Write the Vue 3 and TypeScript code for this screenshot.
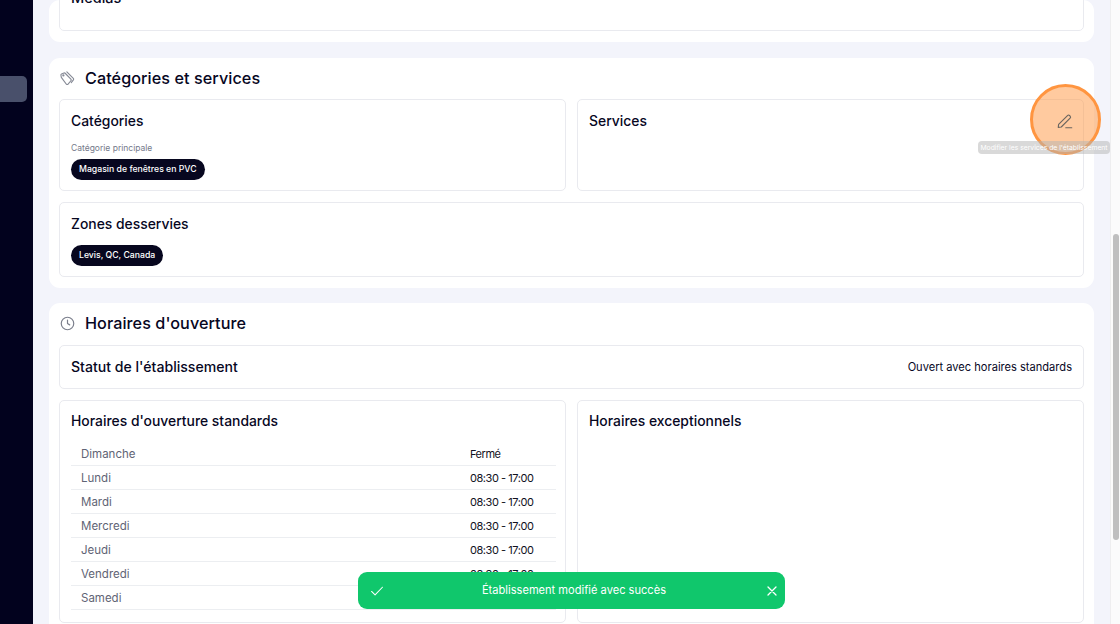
<script setup lang="ts">
const hours: { day: string; time: string }[] = [
  { day: 'Dimanche', time: 'Fermé' },
  { day: 'Lundi', time: '08:30 - 17:00' },
  { day: 'Mardi', time: '08:30 - 17:00' },
  { day: 'Mercredi', time: '08:30 - 17:00' },
  { day: 'Jeudi', time: '08:30 - 17:00' },
  { day: 'Vendredi', time: '08:30 - 17:00' },
  { day: 'Samedi', time: '08:30 - 17:00' },
]
</script>

<template>
  <div class="page">
    <aside class="sidebar"><div class="nav-active"></div></aside>
    <main class="main">
      <section class="section first">
        <div class="card media"><h3 class="card-title">Médias</h3></div>
      </section>

      <section class="section">
        <header class="section-head">
          <svg class="section-icon" viewBox="0 0 16 16" fill="none" stroke="#858995" stroke-width="1.200" stroke-linejoin="round" stroke-linecap="round">
            <path d="M1.300 6.200 1 4.300a1 1 0 0 1 .6-1.100l2.600-1.100a1.200 1.200 0 0 1 1.300.3l6.100 6.300a1.200 1.200 0 0 1 0 1.700l-3 3.600a1.200 1.200 0 0 1-1.800.1L1.800 7.300a2 2 0 0 1-.5-1.100Z" />
            <path d="m7.300 1 6.900 6.900a1.200 1.200 0 0 1 .1 1.600l-2.300 2.900" />
            <circle cx="3.600" cy="4.700" r=".6" />
          </svg>
          <h2>Catégories et services</h2>
        </header>
        <div class="two">
          <div class="card cat">
            <h3 class="card-title">Catégories</h3>
            <div class="label">Catégorie principale</div>
            <span class="chip">Magasin de fenêtres en PVC</span>
          </div>
          <div class="card cat"><h3 class="card-title">Services</h3></div>
        </div>
        <div class="card zones">
          <h3 class="card-title">Zones desservies</h3>
          <span class="chip">Levis, QC, Canada</span>
        </div>
      </section>

      <section class="section last">
        <header class="section-head">
          <svg class="section-icon" viewBox="0 0 24 24" fill="none" stroke="#7b7f8c" stroke-width="1.900" stroke-linecap="round" stroke-linejoin="round">
            <circle cx="12" cy="12" r="10" />
            <path d="M12 6.500V12l3.500 2.200" />
          </svg>
          <h2>Horaires d'ouverture</h2>
        </header>
        <div class="card status">
          <h3 class="card-title status-title">Statut de l'établissement</h3>
          <span class="status-value">Ouvert avec horaires standards</span>
        </div>
        <div class="two">
          <div class="card hours">
            <h3 class="card-title">Horaires d'ouverture standards</h3>
            <div class="table">
              <div v-for="h in hours" :key="h.day" class="row">
                <span class="day">{{ h.day }}</span>
                <span class="time">{{ h.time }}</span>
              </div>
            </div>
          </div>
          <div class="card hours"><h3 class="card-title">Horaires exceptionnels</h3></div>
        </div>
      </section>
    </main>
    <div class="scrollbar"><div class="thumb"></div></div>

    <div class="highlight">
      <svg viewBox="0 0 24 24" fill="none" stroke="#6a655f" stroke-width="1.500" stroke-linecap="round" stroke-linejoin="round">
        <path d="M3 20.500 3.500 16.500 15.300 4.700a2 2 0 0 1 2.800 0l.7.700a2 2 0 0 1 0 2.800L7 20l-4 .5Z" />
        <path d="M13 21h8" />
      </svg>
    </div>
    <div class="tooltip">Modifier les services de l'établissement</div>

    <div class="toast">
      <svg class="toast-check" viewBox="0 0 16 16" fill="none" stroke="#fff" stroke-width="1.200" stroke-linecap="round" stroke-linejoin="round">
        <path d="m1.800 8.500 4 4 8.400-8.800" />
      </svg>
      <span class="toast-text">Établissement modifié avec succès</span>
      <svg class="toast-close" viewBox="0 0 12 12" fill="none" stroke="#fff" stroke-width="1.300" stroke-linecap="round">
        <path d="m2 2 8 8M10 2l-8 8" />
      </svg>
    </div>
  </div>
</template>

<style>
html, body { margin: 0; overflow: hidden; }
</style>

<style scoped>
.page {
  position: relative;
  width: 1120px;
  height: 624px;
  overflow: hidden;
  display: flex;
  background: #f3f4fb;
  font-family: "Inter", "Noto Sans", sans-serif;
  color: #07071f;
}
.sidebar {
  width: 33px;
  flex: none;
  background: #02021e;
  padding-top: 76px;
  box-sizing: border-box;
}
.nav-active {
  width: 27px;
  height: 26px;
  background: #49506b;
  border-radius: 0 5px 5px 0;
}
.main {
  flex: none;
  width: 1045px;
  margin-left: 16px;
  display: flex;
  flex-direction: column;
  gap: 16px;
}
.section {
  background: #fff;
  border-radius: 11px;
  padding: 0 10px 11px;
  display: flex;
  flex-direction: column;
  gap: 11px;
  flex: none;
}
.first { height: 42px; box-sizing: border-box; justify-content: flex-end; overflow: hidden; }
.first .media { height: 60px; flex: none; }
.media .card-title { margin-top: 5px; font-size: 14.500px; }
.last { margin-top: -1px; }
.section-head {
  height: 41px;
  margin-bottom: -11px;
  padding-bottom: 1px;
  box-sizing: border-box;
  display: flex;
  align-items: center;
  gap: 10px;
}
.last .section-head { height: 42px; padding-bottom: 2px; }
.section-icon { width: 15px; height: 15px; flex: none; margin-left: 1px; }
.section-head h2 {
  margin: 0;
  font-size: 16.200px;
  line-height: 24px;
  font-weight: 500;
  letter-spacing: 0.06px;
}
.card {
  background: #fff;
  border: 1.5px solid #e9eaef;
  border-radius: 5px;
  padding: 11px 11px 11px;
  box-sizing: border-box;
}
.card-title {
  margin: 0;
  font-size: 13.900px;
  line-height: 20px;
  font-weight: 500;
}
.status-title { font-size: 14.100px; }
.two { display: grid; grid-template-columns: 1fr 1fr; gap: 11px; }
.cat { height: 92px; }
.label {
  font-size: 8.500px;
  line-height: 12px;
  color: #74798a;
  margin-top: 11px;
  margin-bottom: 2px;
}
.chip {
  display: inline-block;
  height: 21px;
  line-height: 21px;
  padding: 0 8px;
  border-radius: 11px;
  background: #07071f;
  color: #fff;
  font-size: 8.700px;
  font-weight: 500;
}
.zones { height: 75px; padding-top: 11px; }
.zones .chip { margin-top: 11px; }
.status {
  height: 44px;
  display: flex;
  align-items: center;
  justify-content: space-between;
  padding: 0 11px;
}
.status-value { font-size: 11.100px; }
.hours { height: 223px; padding-top: 10px; }
.table { margin-top: 11px; margin-right: -2px; }
.row {
  height: 24px;
  display: flex;
  align-items: center;
  font-size: 11.500px;
  border-bottom: 1px solid #eceef1;
  box-sizing: border-box;
}
.day { width: 399px; padding-left: 10px; box-sizing: border-box; color: #5f6475; }
.time { color: #111122; letter-spacing: -0.45px; font-size: 11px; }
.scrollbar {
  position: absolute;
  left: 1110px;
  top: 0;
  width: 10px;
  height: 624px;
  background: #fbfbfb;
  border-left: 1px solid #eeeeef;
  box-sizing: border-box;
}
.thumb {
  position: absolute;
  left: 2px;
  top: 234px;
  width: 6px;
  height: 306px;
  border-radius: 3px;
  background: #bfbfbf;
}
.highlight {
  position: absolute;
  left: 1030px;
  top: 84px;
  width: 71px;
  height: 71px;
  box-sizing: border-box;
  border-radius: 50%;
  border: 3px solid #ff9540;
  background: rgba(255, 149, 64, 0.5);
  display: flex;
  align-items: center;
  justify-content: center;
}
.highlight svg { width: 18px; height: 18px; margin: 2px 1px 0 0; }
.tooltip {
  position: absolute;
  left: 978px;
  top: 141px;
  width: 132px;
  height: 13px;
  border-radius: 4px;
  background: rgba(180, 180, 180, 0.5);
  color: #fff;
  font-size: 6.800px;
  line-height: 13px;
  text-align: center;
  white-space: nowrap;
  overflow: hidden;
}
.toast {
  position: absolute;
  left: 358px;
  top: 572px;
  width: 427px;
  height: 37px;
  border-radius: 9px;
  background: #10c76c;
  color: #fff;
  display: flex;
  align-items: center;
}
.toast-check { width: 14px; height: 14px; margin-left: 12px; flex: none; }
.toast-text { flex: 1; text-align: center; font-size: 11.100px; padding: 0 2px 2px 0; }
.toast-close { width: 12px; height: 12px; margin-right: 7px; flex: none; }
</style>
